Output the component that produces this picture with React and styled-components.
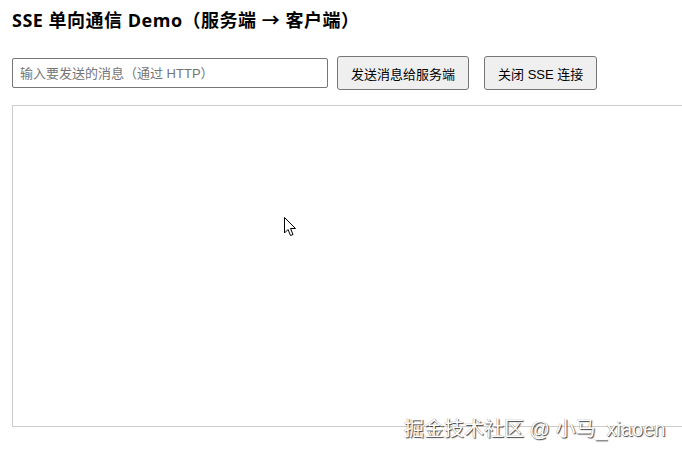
import React, { useState } from 'react';
import styled, { createGlobalStyle } from 'styled-components';

const GlobalStyle = createGlobalStyle`
  html, body {
    margin: 0;
    padding: 0;
    background: #fff;
    overflow: hidden;
  }
  body {
    font-family: "Open Sans", "Noto Sans CJK SC", sans-serif;
    color: #000;
  }
`;

const Page = styled.div`
  position: relative;
  width: 682px;
  height: 455px;
  padding: 9px 12px 0;
  box-sizing: border-box;
  overflow: hidden;
`;

const Title = styled.h3`
  margin: 0;
  font-size: 18px;
  font-weight: 700;
  line-height: 22px;
  letter-spacing: 0.5px;
  white-space: nowrap;
`;

const Controls = styled.div`
  display: flex;
  align-items: center;
  margin-top: 25px;
  height: 34px;
`;

const MessageInput = styled.input`
  width: 316px;
  height: 30px;
  box-sizing: border-box;
  padding: 0 7px;
  border: 1px solid #767676;
  border-radius: 2px;
  font-family: "Liberation Sans", "Noto Sans CJK SC", sans-serif;
  font-size: 13px;
  color: #000;
  outline: none;
  &::placeholder {
    color: #757575;
  }
`;

const Button = styled.button`
  height: 34px;
  box-sizing: border-box;
  margin-left: ${({ $gap }) => $gap}px;
  padding: 0 13px;
  background: #efefef;
  border: 1px solid #767676;
  border-radius: 3px;
  font-family: "Liberation Sans", "Noto Sans CJK SC", sans-serif;
  font-size: 13px;
  color: #000;
  white-space: nowrap;
  cursor: default;
`;

const LogBox = styled.div`
  margin-top: 15px;
  width: 700px;
  height: 322px;
  box-sizing: border-box;
  border: 1px solid #cccccc;
`;

const Watermark = styled.div`
  position: absolute;
  left: 404px;
  top: 416px;
  font-family: "Liberation Sans", "Noto Sans CJK SC", sans-serif;
  font-size: 20px;
  line-height: 26px;
  color: #fff;
  white-space: nowrap;
  text-shadow: 1px 1px 1px rgba(0, 0, 0, 0.75), -0.5px -0.5px 0 rgba(0, 0, 0, 0.35);
`;

const Cursor = styled.svg`
  position: absolute;
  left: 284px;
  top: 217px;
`;

export default function App() {
  const [text, setText] = useState('');
  return (
    <>
      <GlobalStyle />
      <Page>
        <Title>SSE 单向通信 Demo（服务端 → 客户端）</Title>
        <Controls>
          <MessageInput
            value={text}
            onChange={(e) => setText(e.target.value)}
            placeholder="输入要发送的消息（通过 HTTP）"
          />
          <Button $gap={9}>发送消息给服务端</Button>
          <Button $gap={15}>关闭 SSE 连接</Button>
        </Controls>
        <LogBox />
        <Cursor width="13" height="20" viewBox="0 0 13 20">
          <path
            d="M0.5 0.5 L0.5 16 L4 12.5 L6.5 18.5 L9 17.5 L6.5 11.5 L11.5 11.5 Z"
            fill="#fff"
            stroke="#000"
            strokeWidth="1"
            strokeLinejoin="round"
          />
        </Cursor>
        <Watermark>掘金技术社区 @ 小马_xiaoen</Watermark>
      </Page>
    </>
  );
}
